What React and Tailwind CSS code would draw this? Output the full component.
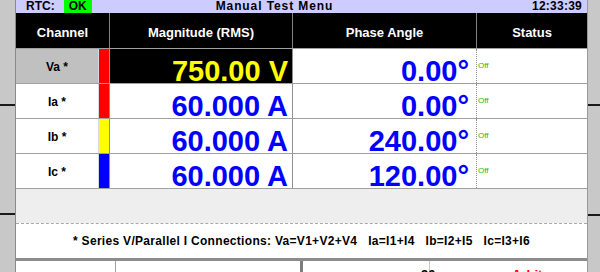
export default function App() {
  const rows = [
    { ch: "Va *", bar: "bg-[#ff0000]", mag: "750.00 V", ph: "0.00°", sel: true },
    { ch: "Ia *", bar: "bg-[#ff0000]", mag: "60.000 A", ph: "0.00°" },
    { ch: "Ib *", bar: "bg-[#ffff00]", mag: "60.000 A", ph: "240.00°" },
    { ch: "Ic *", bar: "bg-[#0000ff]", mag: "60.000 A", ph: "120.00°" },
  ];
  return (
    <div className="w-[600px] h-[272px] overflow-hidden flex bg-white font-['Liberation_Sans',Arial,sans-serif]">
      {/* left strip */}
      <div className="w-[16px] shrink-0 flex flex-col bg-[#c8c8c8] border-r border-[#8a8a8a]">
        <div className="h-[104px] shrink-0" />
        <div className="h-[2px] shrink-0 bg-[#1a1a1a]" />
        <div className="h-[107px] shrink-0" />
        <div className="h-[2px] shrink-0 bg-[#1a1a1a]" />
        <div className="flex-1" />
      </div>

      {/* main */}
      <div className="w-[571px] shrink-0 flex flex-col">
        {/* title bar */}
        <div className="h-[13px] shrink-0 bg-[#ccccff] flex items-stretch text-[12px] font-bold text-black leading-[13px]">
          <div className="ml-[10px] flex items-center">RTC:</div>
          <div className="ml-[9px] w-[28px] bg-[#00ff00] flex items-center justify-center">OK</div>
          <div className="ml-[124px] flex items-center tracking-[0.9px]">Manual Test Menu</div>
          <div className="ml-auto mr-[5px] flex items-center tracking-[0.25px]">12:33:39</div>
        </div>

        {/* table header */}
        <div className="h-[35px] shrink-0 bg-black flex text-white text-[13px] font-bold leading-[13px]">
          <div className="w-[93px] shrink-0 flex items-center justify-center pt-[4px]">Channel</div>
          <div className="w-[183px] shrink-0 border-l border-[#808080] flex items-center justify-center pt-[4px]">Magnitude (RMS)</div>
          <div className="w-[184px] shrink-0 border-l border-[#808080] flex items-center justify-center pt-[4px]">Phase Angle</div>
          <div className="w-[111px] shrink-0 border-l border-[#808080] flex items-center justify-center pt-[4px]">Status</div>
        </div>

        {/* rows */}
        {rows.map((r) => (
          <div key={r.ch} className="h-[35px] shrink-0 flex border-t border-[#a0a0a0]">
            <div
              className={`w-[82px] shrink-0 flex items-center justify-center pt-[2px] text-[12px] font-bold text-black leading-[12px] ${
                r.sel ? "bg-[#c0c0c0]" : "bg-white"
              }`}
            >
              {r.ch}
            </div>
            <div className="w-[1px] shrink-0 bg-[#d8d8d8]" />
            <div className={`w-[10px] shrink-0 ${r.bar}`} />
            <div
              className={`w-[183px] shrink-0 border-l border-[#909090] flex justify-end items-start pt-[12px] pr-[4px] text-[29px] font-bold leading-[20px] ${
                r.sel ? "bg-black text-[#ffff00]" : "bg-white text-[#0000ff]"
              }`}
            >
              {r.mag}
            </div>
            <div className="w-[184px] shrink-0 border-l border-[#909090] flex justify-end items-start pt-[12px] pr-[7px] text-[29px] font-bold leading-[20px] text-[#0000ff]">
              {r.ph}
            </div>
            <div className="w-[111px] shrink-0 border-l border-dotted border-[#909090] flex items-center pl-[1px] text-[8px] leading-[8px] text-[#11bb11]">
              Off
            </div>
          </div>
        ))}

        {/* empty gray area */}
        <div className="h-[35px] shrink-0 bg-[#eeeeee] border-t border-[#a0a0a0]" />

        {/* footer note */}
        <div className="h-[35px] shrink-0 bg-white border-t border-dashed border-[#a8a8a8] flex items-center justify-center text-[12px] tracking-[0.3px] font-bold text-black whitespace-pre">
          {"* Series V/Parallel I Connections: Va=V1+V2+V4   Ia=I1+I4   Ib=I2+I5   Ic=I3+I6"}
        </div>

        {/* bottom row */}
        <div className="h-[3px] shrink-0 bg-[#8c8c8c]" />
        <div className="flex-1 flex bg-white">
          <div className="w-[99px] shrink-0" />
          <div className="w-[185px] shrink-0 border-l border-[#a0a0a0]" />
          <div className="w-[3px] shrink-0 bg-[#7c7c7c]" />
          <div className="flex-1 relative">
            <div className="absolute left-[126px] top-0 bottom-0 w-[1px] bg-[#c8c8c8]" />
            <div className="absolute left-[118px] top-[7px] text-[13px] font-bold leading-[13px] text-black">90</div>
            <div className="absolute left-[209px] top-[7px] text-[13px] font-bold leading-[13px] text-[#ff0000]">Arbitrary</div>
          </div>
        </div>
      </div>

      {/* right strip */}
      <div className="flex-1 flex flex-col bg-[#c8c8c8] border-l border-[#9a9a9a]">
        <div className="h-[104px] shrink-0" />
        <div className="h-[2px] shrink-0 bg-[#1a1a1a]" />
        <div className="h-[108px] shrink-0" />
        <div className="h-[2px] shrink-0 bg-[#1a1a1a]" />
        <div className="flex-1" />
      </div>
    </div>
  );
}
